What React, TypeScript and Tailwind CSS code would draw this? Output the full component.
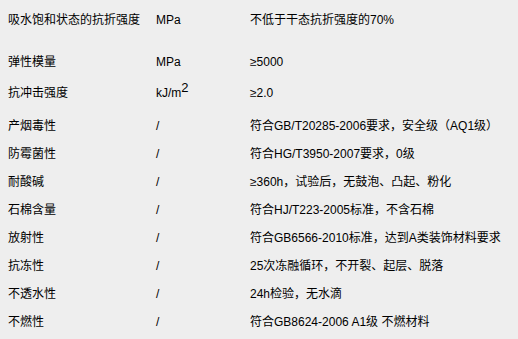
import type { ReactNode } from 'react'

interface Row {
  name: string
  unit: ReactNode
  value: string
  height: string
}

const rows: Row[] = [
  { name: '吸水饱和状态的抗折强度', unit: 'MPa', value: '不低于干态抗折强度的70%', height: 'h-[40px] items-center' },
  { name: '弹性模量', unit: 'MPa', value: '≥5000', height: 'h-[44px] items-center' },
  {
    name: '抗冲击强度',
    unit: (
      <span>
        kJ/m<span className="relative -top-[5px] text-[13px]">2</span>
      </span>
    ),
    value: '≥2.0',
    height: 'h-[28px] items-start pt-[1px]',
  },
  { name: '产烟毒性', unit: '/', value: '符合GB/T20285-2006要求，安全级（AQ1级）', height: 'h-[28px] items-center' },
  { name: '防霉菌性', unit: '/', value: '符合HG/T3950-2007要求，0级', height: 'h-[28px] items-center' },
  { name: '耐酸碱', unit: '/', value: '≥360h，试验后，无鼓泡、凸起、粉化', height: 'h-[28px] items-center' },
  { name: '石棉含量', unit: '/', value: '符合HJ/T223-2005标准，不含石棉', height: 'h-[28px] items-center' },
  { name: '放射性', unit: '/', value: '符合GB6566-2010标准，达到A类装饰材料要求', height: 'h-[28px] items-center' },
  { name: '抗冻性', unit: '/', value: '25次冻融循环，不开裂、起层、脱落', height: 'h-[28px] items-center' },
  { name: '不透水性', unit: '/', value: '24h检验，无水滴', height: 'h-[28px] items-center' },
  { name: '不燃性', unit: '/', value: '符合GB8624-2006 A1级 不燃材料', height: 'h-[28px] items-center' },
]

export default function App() {
  return (
    <div className="h-[339px] w-[518px] overflow-hidden bg-[#eeeeee] pl-2 font-['Liberation_Sans','Noto_Sans_CJK_SC',sans-serif] text-[12px] leading-4 text-black">
      {rows.map((row) => (
        <div key={row.name} className={`grid grid-cols-[148px_94px_1fr] ${row.height}`}>
          <span>{row.name}</span>
          <span>{row.unit}</span>
          <span className="whitespace-nowrap">{row.value}</span>
        </div>
      ))}
    </div>
  )
}
